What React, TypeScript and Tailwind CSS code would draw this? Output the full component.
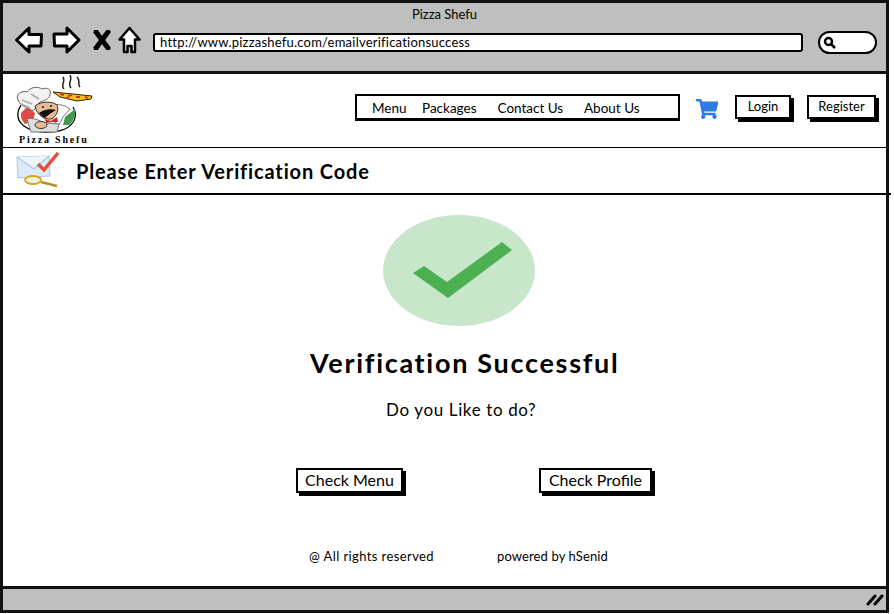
import { FaShoppingCart } from "react-icons/fa";

const font = { fontFamily: '"Lato", "Noto Sans", sans-serif' };

function ArrowLeft() {
  return (
    <svg width="28" height="28" viewBox="0 0 28 28">
      <path d="M1.500 14 L14 2 L14 8.500 L26.500 8.500 L26 20 L14 20 L14 26 Z" fill="#fff" stroke="#000" strokeWidth="3" strokeLinejoin="round" />
    </svg>
  );
}

function ArrowRight() {
  return (
    <svg width="29" height="28" viewBox="0 0 29 28">
      <path d="M27 14 L15 2 L15 8 L2 8 L2.500 20 L15 20 L15 26 Z" fill="#fff" stroke="#000" strokeWidth="3" strokeLinejoin="round" />
    </svg>
  );
}

function CloseMark() {
  return (
    <svg width="18" height="20" viewBox="0 0 18 20">
      <path d="M3 2 L15 18 M15 2 L3 18" stroke="#000" strokeWidth="5" strokeLinecap="round" fill="none" />
    </svg>
  );
}

function HomeMark() {
  return (
    <svg width="23" height="28" viewBox="0 0 23 28">
      <path d="M11.500 2 L21.500 13.500 L17 13.500 L17 26 L13.500 26 L13.500 20 L9.500 20 L9.500 26 L6 26 L6 13.500 L1.500 13.500 Z" fill="#fff" stroke="#000" strokeWidth="2.500" strokeLinejoin="round" />
    </svg>
  );
}

function ChefLogo() {
  return (
    <svg width="78" height="60" viewBox="0 0 78 60" className="block">
      {/* steam */}
      <path d="M49 14 C45 10 51 7 48 2 M56 13 C52 8 58 5 55 0 M65 12 C62 9 66 6 62 2" stroke="#222" strokeWidth="1.500" fill="none" />
      {/* plate */}
      <path d="M6 30 C1 38 2 46 9 51 C18 58 38 59 50 54 C60 49 63 40 58 32" fill="#fff" stroke="#000" strokeWidth="1.300" />
      <path d="M6 38 L12 32 L20 38 L18 46 L10 49 Q5 44 6 38 Z" fill="#df4b45" />
      <path d="M48 50 L50 42 L60 34 Q61 44 54 50 Z" fill="#3f9a4b" />
      {/* hat */}
      <path d="M3 25 C0 19 7 15 12 17 C15 12 23 11 27 14 C32 12 37 14 35 20 C34 24 29 26 25 27 L18 36 C13 33 5 31 3 25 Z" fill="#f1f1f1" stroke="#666" strokeWidth="1" />
      <path d="M7 25 L17 29 M16 19 L24 24 M6 29 L15 33" stroke="#aaa" strokeWidth="1.500" fill="none" />
      {/* pizza */}
      <path d="M38 17 L77 21 L76 24 L62 26 L45 22 Z" fill="#f1c40f" stroke="#332200" strokeWidth="1" />
      <path d="M45 19 L49 20 M53 21 L57 20 M61 22 L65 22 M70 22 L73 23 M51 23 L54 23" stroke="#d0342c" strokeWidth="2" fill="none" />
      {/* swoosh and sleeve */}
      <path d="M36 31 C42 28 50 30 55 34 L48 42 L44 50 L38 46 Z" fill="#fff" stroke="#555" strokeWidth="0.800" />
      {/* face */}
      <path d="M20 31 C26 26 37 26 42 30 C44 35 42 41 36 44 C29 45 22 40 20 31 Z" fill="#e6bd92" stroke="#333" strokeWidth="1" />
      <path d="M24 38 C28 35 35 33 41 35 C37 37 33 40 30 43 C27 41 25 40 24 38 Z" fill="#111" />
      <circle cx="28" cy="32" r="1" fill="#111" />
      <circle cx="36" cy="31" r="1" fill="#111" />
      <path d="M30 44 L36 46 L42 42 L43 47 L37 47 L31 48 Z" fill="#d0281f" />
      {/* body */}
      <path d="M12 44 C16 42 24 45 30 48 L44 49 L42 57 L16 57 Z" fill="#ddd" stroke="#777" strokeWidth="1" />
      <ellipse cx="26" cy="50" rx="6" ry="3.500" fill="#e6bd92" stroke="#333" strokeWidth="1" />
    </svg>
  );
}

function MailCheck() {
  return (
    <svg width="46" height="36" viewBox="0 0 46 36" className="block">
      <path d="M1 5 L33 4 L34 24 L2 26 Z" fill="#dcebfa" stroke="#a9c6e6" strokeWidth="1" />
      <path d="M1 5 L18 17 L33 4" fill="#eef6fd" stroke="#a9c6e6" strokeWidth="1.200" />
      <path d="M22 12 L28 18 L42 1" fill="none" stroke="#e2503a" strokeWidth="3.500" />
      <ellipse cx="17" cy="28" rx="8" ry="4" fill="#f3f0d8" stroke="#d3a91f" strokeWidth="1.800" />
      <path d="M25 30 L41 34" stroke="#b98d2c" strokeWidth="2.500" />
    </svg>
  );
}

function SketchButton({ label, className }: { label: string; className: string }) {
  return (
    <button className={`flex items-center justify-center border-2 border-black bg-white text-black shadow-[3px_3px_0_#000] ${className}`}>
      {label}
    </button>
  );
}

export default function App() {
  return (
    <div className="h-[614px] w-[894px] overflow-hidden bg-white" style={font}>
      <div className="flex h-[613px] w-[889px] flex-col border-[3px] border-[#111] text-black">
        {/* browser chrome */}
        <div className="h-[71px] shrink-0 border-b-[3px] border-[#111] bg-[#bfbfbf]">
          <div className="pt-[3px] text-center text-[13px] leading-4">Pizza Shefu</div>
          <div className="mt-[3px] flex items-center pl-[12px]">
            <ArrowLeft />
            <div className="ml-[9px]">
              <ArrowRight />
            </div>
            <div className="ml-[12px]">
              <CloseMark />
            </div>
            <div className="ml-[7px]">
              <HomeMark />
            </div>
            <div className="ml-[12px] mt-[6px] flex h-[19px] w-[650px] items-center rounded-[3px] border-2 border-black bg-white pl-[5px] text-[13px] leading-none tracking-[0.220px]">
              http://www.pizzashefu.com/emailverificationsuccess
            </div>
            <div className="ml-[15px] mt-[6px] flex h-[23px] w-[59px] items-center rounded-full border-[2.500px] border-black bg-white pl-[3px]">
              <svg width="13" height="13" viewBox="0 0 13 13">
                <circle cx="5.500" cy="5.500" r="3.500" fill="none" stroke="#000" strokeWidth="2.500" />
                <path d="M8 8 L12 12" stroke="#000" strokeWidth="2.500" />
              </svg>
            </div>
          </div>
        </div>

        {/* site header */}
        <div className="flex h-[74px] shrink-0 items-start border-b border-black">
          <div className="ml-[12px] mt-px w-[80px] shrink-0">
            <ChefLogo />
            <div className="h-[9px] overflow-hidden whitespace-nowrap pl-[4px] text-[10px] font-bold leading-[10px] tracking-[1.800px]" style={{ fontFamily: '"Liberation Serif", serif' }}>
              Pizza Shefu
            </div>
          </div>
          <nav className="ml-[260px] mt-[20px] flex h-[27px] w-[325px] items-center border-2 border-b-[3px] border-black pl-[15px] pt-[2px] text-[13.500px]">
            <span className="w-[50px]">Menu</span>
            <span className="w-[75.500px]">Packages</span>
            <span className="w-[86.500px]">Contact Us</span>
            <span>About Us</span>
          </nav>
          <FaShoppingCart className="ml-[15px] mt-[25px] h-[20px] w-[24px] text-[#2f7be5]" />
          <SketchButton label="Login" className="ml-[16px] mt-[21px] h-[24px] w-[56px] text-[13px]" />
          <SketchButton label="Register" className="ml-[16px] mt-[21px] h-[24px] w-[69px] text-[13px]" />
        </div>

        {/* page title */}
        <div className="-mr-[5px] flex h-[47px] shrink-0 items-center border-b-2 border-black pl-[13px]">
          <div className="mb-[2px]">
            <MailCheck />
          </div>
          <h1 className="ml-[14px] text-[20px] font-bold tracking-[0.850px]">Please Enter Verification Code</h1>
        </div>

        {/* main */}
        <main className="flex flex-1 flex-col items-start">
          <div className="ml-[380px] mt-[20px] flex h-[111px] w-[152px] items-center justify-center rounded-[50%] bg-[#c8e6c9]">
            <svg width="100" height="57" viewBox="0 0 100 57" className="ml-[7px] block">
              <path d="M0 31 L11 24 L34 40 L89 0 L99 8 L35 56 Z" fill="#4caf50" />
            </svg>
          </div>
          <h2 className="ml-[307px] mt-[20px] text-[27px] font-bold leading-[34px] tracking-[1.700px]">Verification Successful</h2>
          <p className="ml-[383px] mt-[19px] text-[17px] leading-[22px] tracking-[0.630px]">Do you Like to do?</p>
          <div className="ml-[293px] mt-[47px] flex">
            <SketchButton label="Check Menu" className="h-[25px] w-[107px] pb-px text-[16px]" />
            <SketchButton label="Check Profile" className="ml-[136px] h-[25px] w-[113px] pb-px text-[16px]" />
          </div>
          <div className="ml-[306px] mt-[55px] flex text-[13px] leading-4">
            <span className="w-[188px] tracking-[0.400px]">@ All rights reserved</span>
            <span className="tracking-[0.120px]">powered by hSenid</span>
          </div>
        </main>

        {/* status bar */}
        <div className="flex h-[24px] shrink-0 items-center justify-end border-t-[3px] border-[#111] bg-[#bfbfbf] pr-[2px]">
          <svg width="18" height="13" viewBox="0 0 18 13">
            <path d="M2 11 L9 3 M9 11 L16 3" stroke="#000" strokeWidth="3" strokeLinecap="round" />
          </svg>
        </div>
      </div>
    </div>
  );
}
